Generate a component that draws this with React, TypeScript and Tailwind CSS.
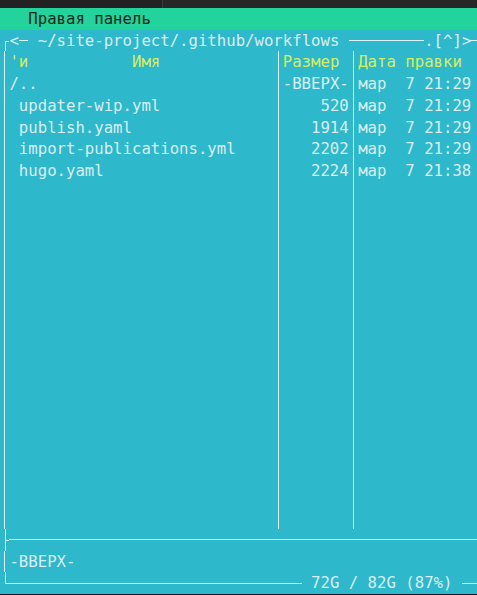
import React from "react";

const ROW = "flex h-[21.71px] shrink-0 leading-[21.71px] whitespace-pre";

const files = [
  { name: " updater-wip.yml", size: "520", date: "мар  7 21:29" },
  { name: " publish.yaml", size: "1914", date: "мар  7 21:29" },
  { name: " import-publications.yml", size: "2202", date: "мар  7 21:29" },
  { name: " hugo.yaml", size: "2224", date: "мар  7 21:38" },
];

function VLine() {
  return (
    <div className="flex w-[1ch] shrink-0 justify-center">
      <div className="h-full w-px bg-[#def3f5]" />
    </div>
  );
}

// corner / tee pieces for the left frame column
function Joint({ kind }: { kind: "top" | "tee" | "bottom" }) {
  return (
    <div className="flex w-[1ch] shrink-0 flex-col">
      <div
        className={
          "ml-[50%] h-1/2 " + (kind === "top" ? "" : "border-l border-[#def3f5]")
        }
      />
      <div
        className={
          "ml-[50%] h-1/2 border-t border-[#def3f5] " +
          (kind === "bottom" ? "" : "border-l")
        }
      />
    </div>
  );
}

function HLine({ className = "" }: { className?: string }) {
  return (
    <div className={"flex items-center " + className}>
      <div className="h-px w-full bg-[#def3f5]" />
    </div>
  );
}

function DataRow({
  name,
  size,
  date,
  head,
}: {
  name?: string;
  size?: string;
  date?: string;
  head?: boolean;
}) {
  const tone = head ? "text-[#d6ee5e]" : "text-[#d9eef2]";
  return (
    <div className={ROW}>
      <VLine />
      <div className={"w-[28ch] shrink-0 overflow-hidden " + tone}>{name ?? ""}</div>
      <VLine />
      <div className={"w-[7ch] shrink-0 " + tone + (head ? "" : " text-right")}>
        {size ?? ""}
      </div>
      <VLine />
      <div className={"flex-1 " + tone}>{date ?? ""}</div>
    </div>
  );
}

export default function App() {
  const empty = Array.from({ length: 16 });
  return (
    <div className="flex h-[595px] w-[477px] flex-col overflow-hidden bg-[#111] font-['DejaVu_Sans_Mono',monospace] text-[15.66px]">
      <div className="flex h-[8px] shrink-0 bg-[#222]">
        <div className="w-[162px]" />
        <div className="w-[314px] border-l border-[#3a3a3a] bg-[#262626]" />
      </div>

      <div className={ROW + " bg-[#22d39b] text-[#08261c]"}>{"   Правая панель"}</div>

      <div className="flex flex-col bg-[#2db8cc] text-[#d9eef2]">
        <div className={ROW}>
          <Joint kind="top" />
          <span>{"<"}</span>
          <HLine className="w-[1ch]" />
          <span>{" ~/site-project/.github/workflows "}</span>
          <HLine className="w-[8ch]" />
          <span>{".[^]>"}</span>
          <HLine className="flex-1" />
        </div>

        <DataRow name={"'и           Имя"} size="Размер" date="Дата правки" head />
        <DataRow name="/.." size="-ВВЕРХ-" date="мар  7 21:29" />
        {files.map((f) => (
          <DataRow key={f.name} name={f.name} size={f.size} date={f.date} />
        ))}
        {empty.map((_, i) => (
          <DataRow key={i} />
        ))}

        <div className={ROW}>
          <Joint kind="tee" />
          <HLine className="flex-1" />
        </div>
        <div className={ROW}>
          <VLine />
          <span>-ВВЕРХ-</span>
        </div>
        <div className={ROW}>
          <Joint kind="bottom" />
          <HLine className="w-[31ch]" />
          <span>{" 72G / 82G (87%) "}</span>
          <HLine className="flex-1" />
        </div>
      </div>
    </div>
  );
}
